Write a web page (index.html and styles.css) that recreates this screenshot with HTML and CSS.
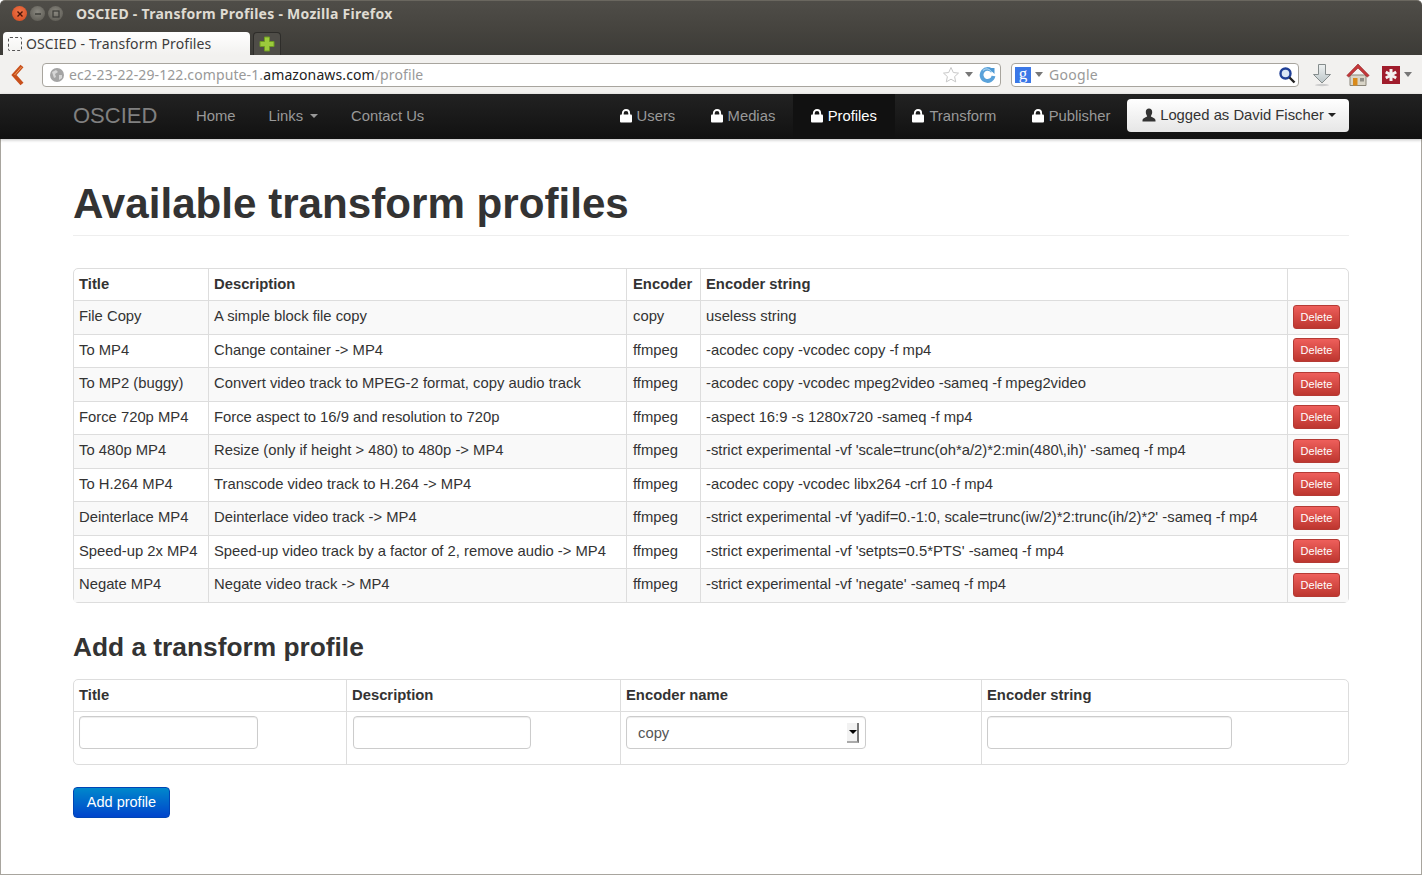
FILE: index.html
```html
<!DOCTYPE html>
<html lang="en">
<head>
<meta charset="UTF-8">
<title>OSCIED - Transform Profiles - Mozilla Firefox</title>
<link rel="stylesheet" href="styles.css">
</head>
<body>
<div class="window">

  <!-- firefox chrome -->
  <div class="titlebar">
    <span class="wbtn wbtn-close"><svg width="8" height="8" viewBox="0 0 8 8"><path d="M1.5 1.5l5 5M6.5 1.5l-5 5" stroke="#4a1408" stroke-width="1.4"/></svg></span>
    <span class="wbtn"><svg width="8" height="8" viewBox="0 0 8 8"><path d="M1 4h6" stroke="#3a3a36" stroke-width="1.4"/></svg></span>
    <span class="wbtn"><svg width="8" height="8" viewBox="0 0 8 8"><rect x="1" y="1" width="6" height="6" fill="none" stroke="#3a3a36" stroke-width="1.2"/></svg></span>
    <span class="wintitle">OSCIED - Transform Profiles - Mozilla Firefox</span>
  </div>
  <div class="tabstrip">
    <div class="tab"><span class="favicon"></span>OSCIED - Transform Profiles</div>
    <div class="newtab"><svg width="16" height="16" viewBox="0 0 16 16"><path d="M5.500 1h5v4.500h4.500v5h-4.500v4.500h-5v-4.500h-4.500v-5h4.500z" fill="#9ccb3c" stroke="#6f9a22"/></svg></div>
  </div>
  <div class="toolbar">
    <svg class="backbtn" width="14" height="22" viewBox="0 0 14 22"><path d="M11 2L3 11l8 9" fill="none" stroke="#c8501c" stroke-width="4"/><path d="M10.500 3L3.500 11" fill="none" stroke="#f0a060" stroke-width="1"/></svg>
    <div class="urlbar">
      <svg width="16" height="16" viewBox="0 0 16 16"><circle cx="8" cy="8" r="7" fill="#a4a4a4"/><path d="M3 5l4-2 2 2-3 2 1 3-2 1zM10 8l3 0 0 3-3 2z" fill="#d6d6d6"/></svg>
      <span class="url"><span class="dim">ec2-23-22-29-122.compute-1.</span>amazonaws.com<span class="dim">/profile</span></span>
      <svg class="star" width="18" height="18" viewBox="0 0 18 18"><path d="M9 1.500l2.300 5 5.200.6-3.900 3.500 1.100 5.300L9 13.200l-4.700 2.700 1.100-5.300L1.500 7.100l5.200-.6z" fill="#fff" stroke="#c8c8c8"/></svg>
      <span class="arrow"></span>
      <svg class="reload" width="17" height="17" viewBox="0 0 17 17"><path d="M13.500 5.500A6 6 0 1 0 14.500 10" fill="none" stroke="#5aa2da" stroke-width="3.800"/><path d="M12.800 6A5.500 5.500 0 0 0 4 4.500" fill="none" stroke="#a9d2ef" stroke-width="1.200"/><path d="M10 1h6v6z" fill="#4c98d4" transform="translate(-.5 1)"/></svg>
    </div>
    <div class="searchbar">
      <span class="gicon">g</span>
      <span class="arrow"></span>
      <span class="searchtext">Google</span>
      <svg width="18" height="18" viewBox="0 0 18 18"><circle cx="7.500" cy="7.500" r="5" fill="#dbe7f5" stroke="#1f3f96" stroke-width="2.400"/><path d="M11.500 11.500l5 5" stroke="#222" stroke-width="2.400"/></svg>
    </div>
    <svg class="tool-down" width="20" height="24" viewBox="0 0 20 24"><defs><linearGradient id="dl" x1="0" y1="0" x2="0" y2="1"><stop offset="0" stop-color="#eef1f1"/><stop offset="1" stop-color="#bcc6c8"/></linearGradient></defs><path d="M6.500 1.500h7v10h5L10 20 1.500 11.500h5z" fill="url(#dl)" stroke="#858c8c"/><ellipse cx="10" cy="22" rx="7" ry="1.200" fill="#ccc"/></svg>
    <svg class="tool-home" width="24" height="24" viewBox="0 0 24 24"><path d="M4 12h16v10.500H4z" fill="#d9d5c8" stroke="#8a8578"/><path d="M12 1L0.800 12.500l2 1.500L12 5l9.200 9 2-1.500z" fill="#c4383a" stroke="#8e2224" stroke-width=".6"/><path d="M7 15h4.500v7.500H7z" fill="#d98a1a"/><path d="M14 15h4v3.500h-4z" fill="#8f8d85"/></svg>
    <span class="tool-lastpass"><svg width="18" height="18" viewBox="0 0 18 18"><rect width="18" height="18" fill="#a01c2c"/><path d="M9 3v12M3.800 6l10.400 6M14.200 6L3.800 12" stroke="#f4f0f0" stroke-width="3"/></svg><span class="arrow"></span></span>
  </div>

  <!-- site navbar -->
  <div class="navbar">
    <a class="brand">OSCIED</a>
    <ul class="nav">
      <li><a>Home</a></li>
      <li><a>Links<b class="caret"></b></a></li>
      <li><a>Contact Us</a></li>
    </ul>
    <ul class="nav nav-right">
      <li><a><svg class="lock" width="12" height="14" viewBox="0 0 12 14"><path d="M2.800 6V4.200a3.200 3.200 0 0 1 6.400 0V6" fill="none" stroke="#fff" stroke-width="1.800"/><rect y="5.500" width="12" height="8" rx="1" fill="#fff"/></svg>Users</a></li>
      <li><a><svg class="lock" width="12" height="14" viewBox="0 0 12 14"><path d="M2.800 6V4.200a3.200 3.200 0 0 1 6.400 0V6" fill="none" stroke="#fff" stroke-width="1.800"/><rect y="5.500" width="12" height="8" rx="1" fill="#fff"/></svg>Medias</a></li>
      <li class="active"><a><svg class="lock" width="12" height="14" viewBox="0 0 12 14"><path d="M2.800 6V4.200a3.200 3.200 0 0 1 6.400 0V6" fill="none" stroke="#fff" stroke-width="1.800"/><rect y="5.500" width="12" height="8" rx="1" fill="#fff"/></svg>Profiles</a></li>
      <li><a><svg class="lock" width="12" height="14" viewBox="0 0 12 14"><path d="M2.800 6V4.200a3.200 3.200 0 0 1 6.400 0V6" fill="none" stroke="#fff" stroke-width="1.800"/><rect y="5.500" width="12" height="8" rx="1" fill="#fff"/></svg>Transform</a></li>
      <li><a><svg class="lock" width="12" height="14" viewBox="0 0 12 14"><path d="M2.800 6V4.200a3.200 3.200 0 0 1 6.400 0V6" fill="none" stroke="#fff" stroke-width="1.800"/><rect y="5.500" width="12" height="8" rx="1" fill="#fff"/></svg>Publisher</a></li>
    </ul>
    <button class="btn-user"><svg width="14" height="14" viewBox="0 0 14 14"><path d="M7 .5c2 0 3.200 1.500 3.200 3.500S9.200 7.500 8.800 8.300c.3 1 4.700 1.500 4.700 4.200v1H.5v-1c0-2.700 4.400-3.200 4.700-4.200C4.800 7.500 3.800 6 3.800 4S5 .5 7 .5z" fill="#333"/></svg>Logged as David Fischer<b class="caret caret-dark"></b></button>
  </div>

  <!-- page -->
  <div class="content">
    <h1 class="page-title">Available transform profiles</h1>

    <table class="table profiles">
      <colgroup>
        <col class="c-title"><col class="c-desc"><col class="c-enc"><col class="c-str"><col class="c-del">
      </colgroup>
      <thead>
        <tr><th>Title</th><th>Description</th><th>Encoder</th><th>Encoder string</th><th></th></tr>
      </thead>
      <tbody>
        <tr><td>File Copy</td><td>A simple block file copy</td><td>copy</td><td>useless string</td><td><button class="btn-del">Delete</button></td></tr>
        <tr><td>To MP4</td><td>Change container -&gt; MP4</td><td>ffmpeg</td><td>-acodec copy -vcodec copy -f mp4</td><td><button class="btn-del">Delete</button></td></tr>
        <tr><td>To MP2 (buggy)</td><td>Convert video track to MPEG-2 format, copy audio track</td><td>ffmpeg</td><td>-acodec copy -vcodec mpeg2video -sameq -f mpeg2video</td><td><button class="btn-del">Delete</button></td></tr>
        <tr><td>Force 720p MP4</td><td>Force aspect to 16/9 and resolution to 720p</td><td>ffmpeg</td><td>-aspect 16:9 -s 1280x720 -sameq -f mp4</td><td><button class="btn-del">Delete</button></td></tr>
        <tr><td>To 480p MP4</td><td>Resize (only if height &gt; 480) to 480p -&gt; MP4</td><td>ffmpeg</td><td>-strict experimental -vf 'scale=trunc(oh*a/2)*2:min(480\,ih)' -sameq -f mp4</td><td><button class="btn-del">Delete</button></td></tr>
        <tr><td>To H.264 MP4</td><td>Transcode video track to H.264 -&gt; MP4</td><td>ffmpeg</td><td>-acodec copy -vcodec libx264 -crf 10 -f mp4</td><td><button class="btn-del">Delete</button></td></tr>
        <tr><td>Deinterlace MP4</td><td>Deinterlace video track -&gt; MP4</td><td>ffmpeg</td><td>-strict experimental -vf 'yadif=0.-1:0, scale=trunc(iw/2)*2:trunc(ih/2)*2' -sameq -f mp4</td><td><button class="btn-del">Delete</button></td></tr>
        <tr><td>Speed-up 2x MP4</td><td>Speed-up video track by a factor of 2, remove audio -&gt; MP4</td><td>ffmpeg</td><td>-strict experimental -vf 'setpts=0.5*PTS' -sameq -f mp4</td><td><button class="btn-del">Delete</button></td></tr>
        <tr><td>Negate MP4</td><td>Negate video track -&gt; MP4</td><td>ffmpeg</td><td>-strict experimental -vf 'negate' -sameq -f mp4</td><td><button class="btn-del">Delete</button></td></tr>
      </tbody>
    </table>

    <h2 class="sub-title">Add a transform profile</h2>

    <table class="table addform">
      <colgroup>
        <col class="f-title"><col class="f-desc"><col class="f-enc"><col class="f-str">
      </colgroup>
      <thead>
        <tr><th>Title</th><th>Description</th><th>Encoder name</th><th>Encoder string</th></tr>
      </thead>
      <tbody>
        <tr>
          <td><input type="text" class="in-title"></td>
          <td><input type="text" class="in-desc"></td>
          <td><div class="fake-select"><span class="sel-text">copy</span><span class="sel-arrow"></span></div></td>
          <td><input type="text" class="in-str"></td>
        </tr>
      </tbody>
    </table>

    <button class="btn-add">Add profile</button>
  </div>
</div>
</body>
</html>
```

FILE: styles.css
```css
html, body {
  margin: 0;
  padding: 0;
  height: 100%;
  overflow: hidden;
}
body {
  font-family: "Liberation Sans", Arial, sans-serif;
  background-color: #fff;
}
.window {
  height: 875px;
  box-sizing: border-box;
  display: flex;
  flex-direction: column;
}

/* title bar */
.titlebar {
  height: 31px;
  box-sizing: border-box;
  display: flex;
  align-items: center;
  padding: 0 0 5px 12px;
  gap: 3px;
  background: linear-gradient(#4f4d48, #45433e);
  border-top: 1px solid #6a675f;
  border-radius: 5px 5px 0 0;
}
.wbtn {
  width: 15px;
  height: 15px;
  border-radius: 50%;
  background: radial-gradient(circle at 50% 40%, #8a8880, #55534c);
  display: flex;
  align-items: center;
  justify-content: center;
}
.wbtn-close {
  background: radial-gradient(circle at 50% 40%, #f0764a, #d1481e);
}
.wintitle {
  margin-left: 10px;
  font-family: "Noto Sans", sans-serif;
  font-weight: bold;
  font-size: 14px;
  letter-spacing: 0.27px;
  color: #dfdbd2;
}

/* tabs */
.tabstrip {
  height: 24px;
  display: flex;
  align-items: flex-end;
  padding-left: 3px;
  background: linear-gradient(#45433e, #3c3b37);
}
.tab {
  width: 247px;
  height: 23px;
  box-sizing: border-box;
  display: flex;
  align-items: center;
  padding-left: 5px;
  background: linear-gradient(#fff, #f2f1ef);
  border-radius: 4px 4px 0 0;
  font-family: "Noto Sans", sans-serif;
  font-size: 14px;
  letter-spacing: 0.1px;
  color: #3c3c3c;
}
.favicon {
  width: 12px;
  height: 12px;
  margin-right: 4px;
  border: 1px dashed #555;
  border-radius: 2px;
}
.newtab {
  width: 28px;
  height: 23px;
  margin-left: 3px;
  box-sizing: border-box;
  display: flex;
  align-items: center;
  justify-content: center;
  background: #4f4d48;
  border: 1px solid #2e2d2a;
  border-bottom: none;
  border-radius: 4px 4px 0 0;
}

/* toolbar */
.toolbar {
  height: 39px;
  box-sizing: border-box;
  display: flex;
  align-items: center;
  padding-left: 11px;
  background: #f2f1ef;
}
.backbtn {
  margin-right: 17px;
}
.urlbar, .searchbar {
  height: 24px;
  box-sizing: border-box;
  display: flex;
  align-items: center;
  background: #fff;
  border: 1px solid #a8a59e;
  border-radius: 4px;
}
.urlbar {
  width: 959px;
  padding: 0 3px 0 6px;
}
.url {
  flex: 1;
  margin-left: 4px;
  font-family: "Noto Sans", sans-serif;
  font-size: 14px;
  letter-spacing: 0.11px;
  color: #222;
}
.dim {
  color: #999;
}
.arrow {
  width: 0;
  height: 0;
  margin: 0 4px;
  border-left: 4px solid transparent;
  border-right: 4px solid transparent;
  border-top: 5px solid #777;
}
.urlbar .arrow {
  margin-left: 5px;
  margin-right: 6px;
}
.reload {
  margin-right: 1px;
}
.searchbar {
  width: 288px;
  margin-left: 10px;
  padding: 0 2px 0 3px;
}
.gicon {
  width: 16px;
  height: 16px;
  background: #3b78e7;
  color: #fff;
  font-family: "Liberation Serif", serif;
  font-size: 17px;
  line-height: 13px;
  text-align: center;
}
.searchtext {
  flex: 1;
  margin-left: 2px;
  font-family: "Noto Sans", sans-serif;
  font-size: 14px;
  letter-spacing: 0.3px;
  color: #999;
}
.tool-down {
  margin-left: 13px;
}
.tool-home {
  margin-left: 14px;
}
.tool-lastpass {
  display: flex;
  align-items: center;
  margin-left: 12px;
}

/* navbar */
.navbar {
  height: 45px;
  flex: none;
  box-sizing: border-box;
  display: flex;
  align-items: center;
  padding-left: 73px;
  background: linear-gradient(#222, #111);
  box-shadow: 0 1px 3px rgba(0, 0, 0, 0.25);
  position: relative;
}
.brand {
  width: 106.500px;
  margin-top: -2px;
  font-size: 22px;
  color: #808080;
}
.nav {
  list-style: none;
  display: flex;
  margin: 0;
  padding: 0;
  height: 45px;
}
.nav li {
  display: flex;
}
.nav a {
  display: flex;
  align-items: center;
  padding: 0 16.500px 2px;
  font-size: 14.800px;
  color: #999;
}
.nav-right {
  margin-left: auto;
}
.nav-right a {
  padding: 0 17.700px 2px;
}
.nav .active a {
  background: #111;
  color: #fff;
}
.lock {
  margin-right: 5px;
}
.caret {
  display: inline-block;
  width: 0;
  height: 0;
  margin-left: 4px;
  border-left: 4px solid transparent;
  border-right: 4px solid transparent;
  border-top: 4px solid #999;
}
.nav .caret {
  margin-left: 7px;
}
.caret-dark {
  border-top-color: #222;
}
.btn-user {
  width: 222px;
  height: 33px;
  margin: -2px 73px 0 -1px;
  padding: 0 0 1px 2px;
  display: flex;
  align-items: center;
  justify-content: center;
  gap: 4px;
  background: linear-gradient(#fff, #e6e6e6);
  border: none;
  border-radius: 4px;
  font-family: inherit;
  font-size: 14.800px;
  color: #333;
}
.btn-user .caret {
  margin-left: 0;
}

/* content */
.content {
  flex: 1;
  box-sizing: border-box;
  border-left: 1px solid #a8a59e;
  border-right: 1px solid #a8a59e;
  border-bottom: 1px solid #a8a59e;
  padding: 0 72px;
}
.page-title {
  margin: 36px 0 32px;
  padding-bottom: 2px;
  font-size: 42.150px;
  line-height: 58px;
  color: #333;
  border-bottom: 1px solid #eee;
}
.sub-title {
  margin: 28px 0 15px;
  font-size: 26.300px;
  line-height: 33px;
  color: #333;
}

/* tables */
.table {
  width: 100%;
  table-layout: fixed;
  border-collapse: separate;
  border-spacing: 0;
  border: 1px solid #ddd;
  border-radius: 5px;
  color: #333;
  font-size: 14.800px;
}
.table th, .table td {
  padding: 0 5px;
  text-align: left;
  vertical-align: top;
  border-left: 1px solid #ddd;
  border-top: 1px solid #ddd;
  white-space: nowrap;
}
.table th:first-child, .table td:first-child {
  border-left: none;
}
.table th {
  border-top: none;
  height: 31px;
  line-height: 31px;
  box-sizing: border-box;
}
.profiles td {
  height: 33.500px;
  line-height: 30.500px;
  box-sizing: border-box;
}
.profiles th:nth-child(3), .profiles td:nth-child(3) {
  padding-left: 6px;
}
.profiles tbody tr:nth-child(odd) td {
  background-color: #f9f9f9;
}
.c-title { width: 134px; }
.c-desc { width: 418px; }
.c-enc { width: 74px; }
.c-str { width: 587px; }

.btn-del {
  display: block;
  width: 47px;
  height: 24px;
  margin: 3.800px 0 0 0;
  padding: 0;
  background: linear-gradient(#ee5f5b, #bd362f);
  border: 1px solid #b53a34;
  border-radius: 3px;
  color: #fff;
  font-family: inherit;
  font-size: 11px;
}

.f-title { width: 272px; }
.f-desc { width: 274px; }
.f-enc { width: 361px; }

.addform td {
  height: 53px;
  box-sizing: border-box;
  padding-top: 4px;
}
.addform input, .fake-select {
  display: block;
  height: 33px;
  box-sizing: border-box;
  background: #fff;
  border: 1px solid #ccc;
  border-radius: 4px;
  box-shadow: inset 0 1px 1px rgba(0, 0, 0, 0.075);
}
.in-title { width: 179px; }
.in-desc { width: 178px; margin-left: 1px; }
.in-str { width: 245px; }
.fake-select {
  width: 240px;
  display: flex;
  align-items: center;
  padding-left: 11px;
  position: relative;
  font-size: 14.800px;
  color: #555;
}
.sel-text {
  padding-top: 1px;
}
.sel-arrow {
  position: absolute;
  right: 6px;
  top: 6px;
  width: 12px;
  height: 20px;
  box-sizing: border-box;
  background: #f2f2f2;
  border-right: 2px solid #777;
  border-bottom: 2px solid #aaa;
}
.sel-arrow::after {
  content: "";
  position: absolute;
  left: 2px;
  top: 7px;
  border-left: 4px solid transparent;
  border-right: 4px solid transparent;
  border-top: 4px solid #000;
}

.btn-add {
  display: block;
  width: 97px;
  height: 31px;
  margin-top: 22px;
  padding: 0;
  background: linear-gradient(#0088cc, #0044cc);
  border: 1px solid #0045b5;
  border-radius: 4px;
  color: #fff;
  font-family: inherit;
  font-size: 14.500px;
}
```
